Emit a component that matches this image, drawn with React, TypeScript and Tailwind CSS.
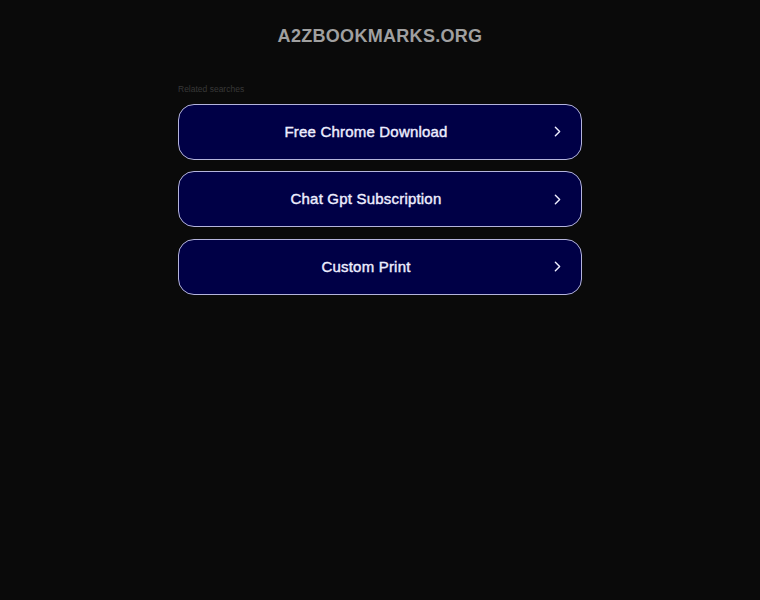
import { ChevronRight } from "lucide-react";

const searches = ["Free Chrome Download", "Chat Gpt Subscription", "Custom Print"];

export default function App() {
  return (
    <div className="min-h-[600px] bg-[#0a0a0a] font-['Liberation_Sans',Arial,sans-serif]">
      <header className="pt-[23px] text-center">
        <h1 className="text-[18px] font-bold uppercase tracking-[0.3px] text-[#a0a0a0]">
          a2zbookmarks.org
        </h1>
      </header>
      <main className="mx-auto mt-[33px] w-[404px]">
        <p className="text-[8.5px] text-[#383838]">Related searches</p>
        <ul className="mt-[8px] flex flex-col gap-[11.5px]">
          {searches.map((s) => (
            <li key={s}>
              <a
                href="#"
                className="relative flex h-[56px] items-center justify-center rounded-[16px] border border-[#b4b4dc] bg-[#000046] pr-[28px] text-[15px] tracking-[0.2px] text-[#eeeeff] [-webkit-text-stroke:0.4px_#eeeeff]"
              >
                {s}
                <ChevronRight className="absolute right-[15px] h-[17px] w-[17px]" strokeWidth={2} />
              </a>
            </li>
          ))}
        </ul>
      </main>
    </div>
  );
}
